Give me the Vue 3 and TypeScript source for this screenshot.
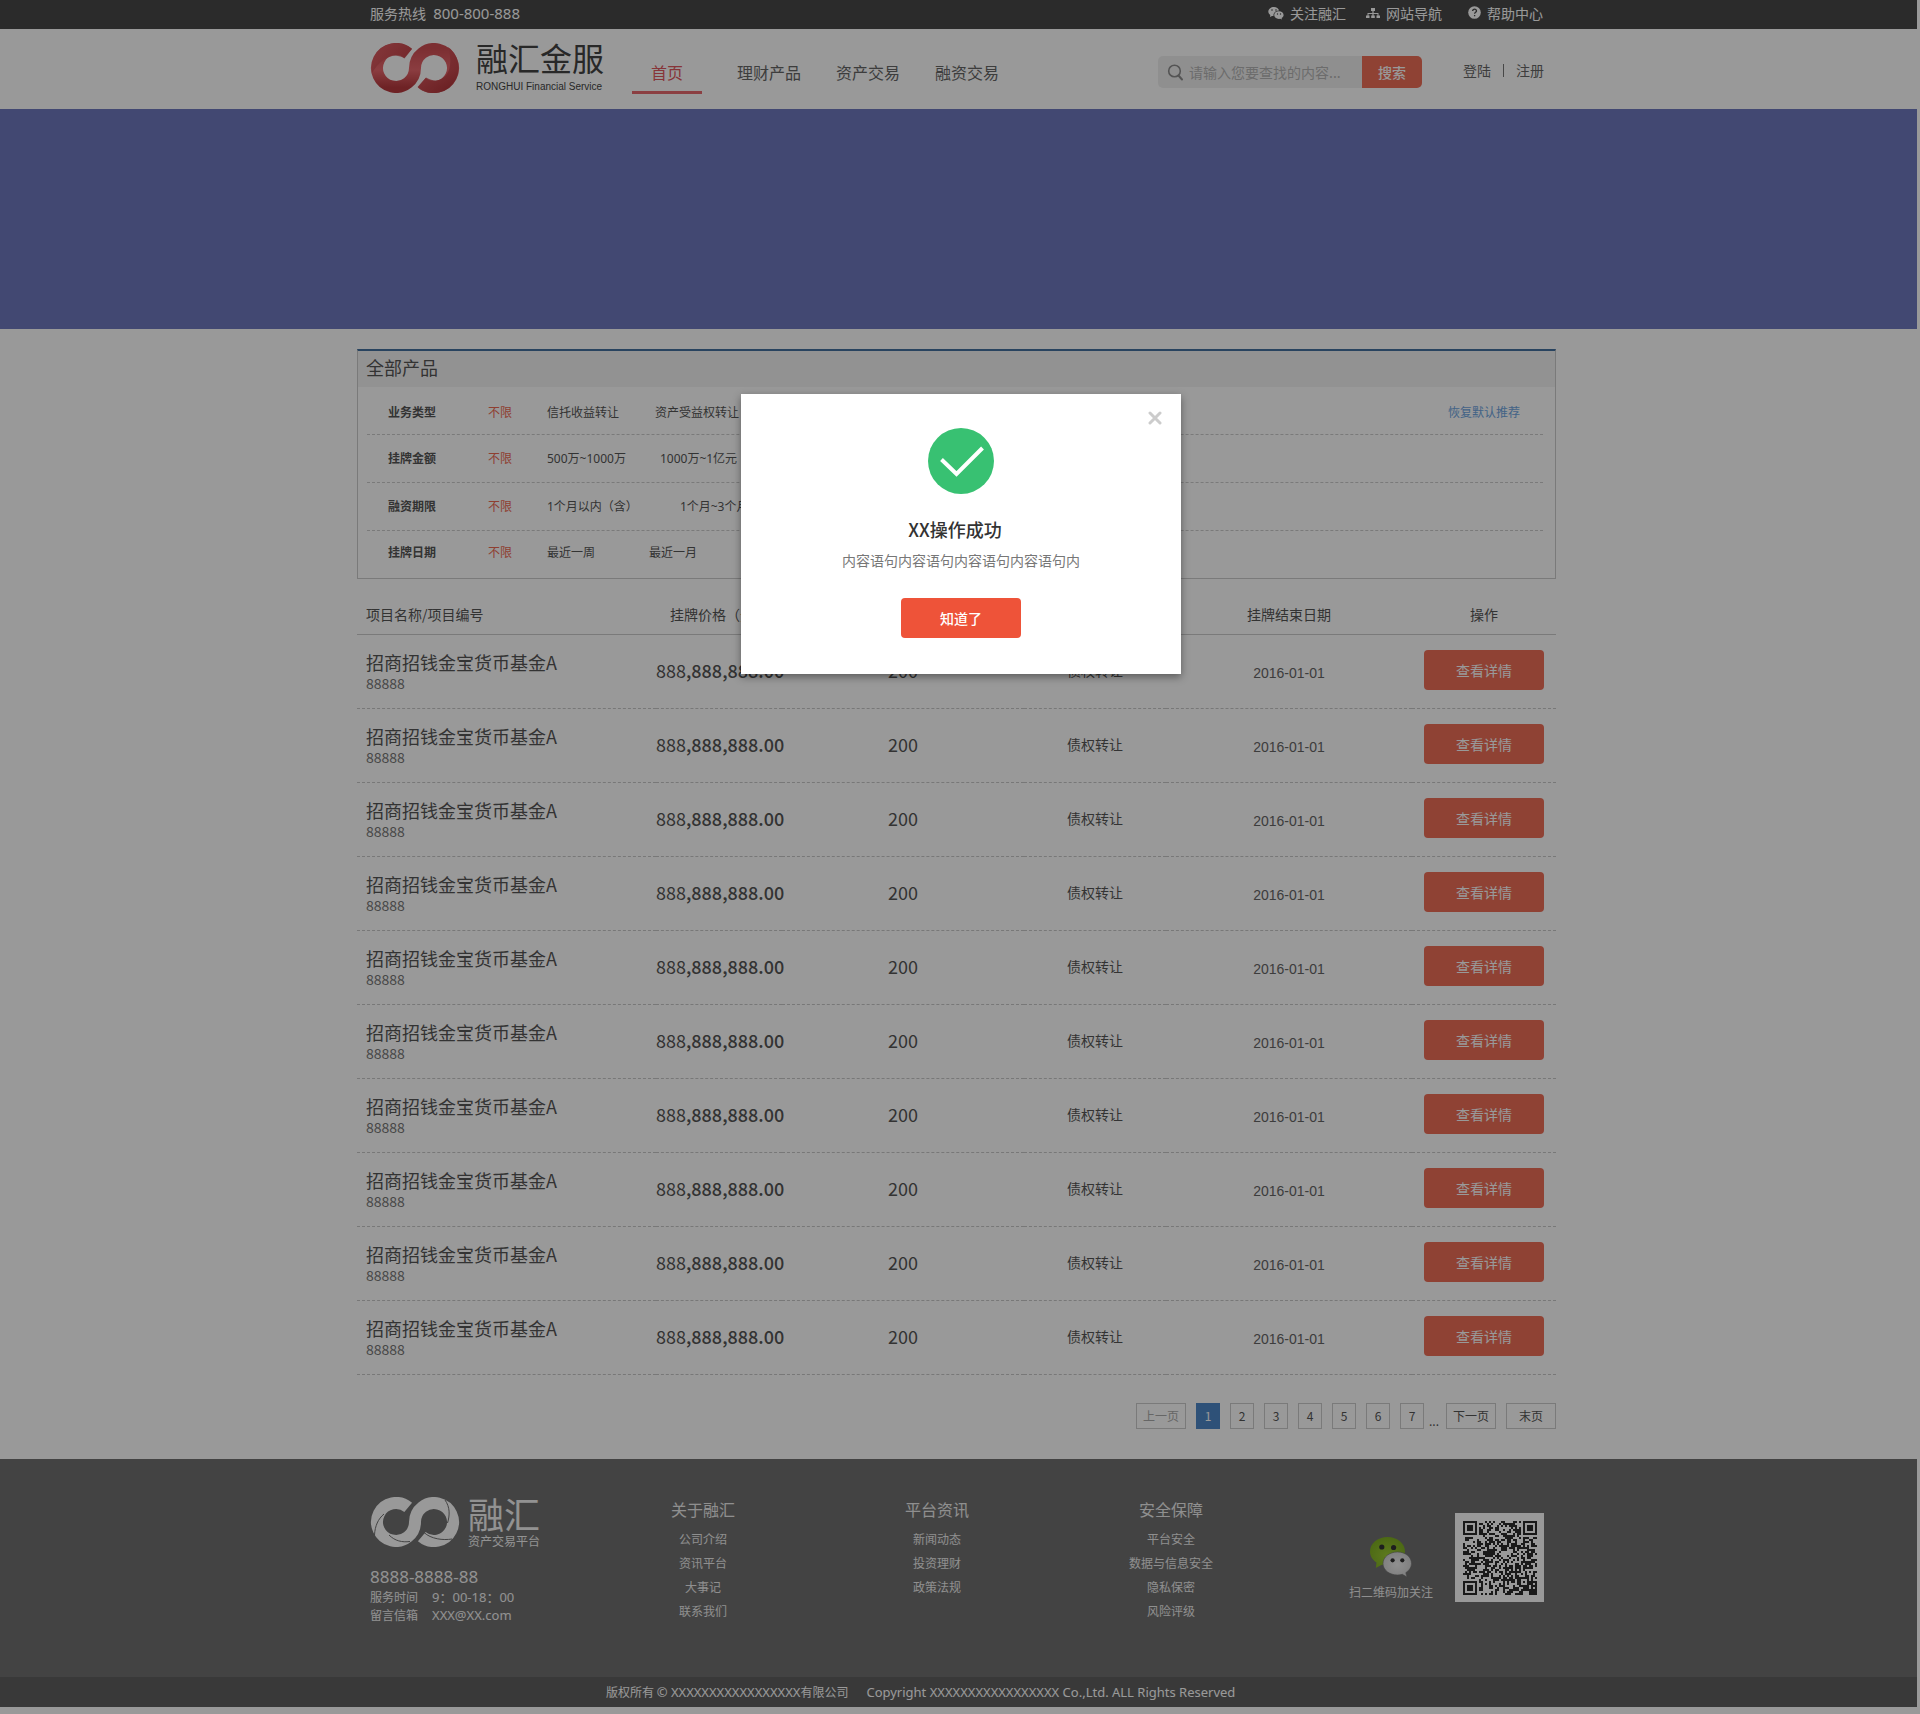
<script setup lang="ts">
import { ref } from 'vue'

interface FilterRow {
  label: string
  options: string[]
  gap: number
}

interface FooterColumn {
  title: string
  links: string[]
}

const navItems = ['首页', '理财产品', '资产交易', '融资交易']
const keyword = ref('')
const dialogOpen = ref(true)

const filters: FilterRow[] = [
  { label: '业务类型', options: ['信托收益转让', '资产受益权转让'], gap: 36 },
  { label: '挂牌金额', options: ['500万~1000万', '1000万~1亿元'], gap: 34 },
  { label: '融资期限', options: ['1个月以内（含）', '1个月~3个月'], gap: 42 },
  { label: '挂牌日期', options: ['最近一周', '最近一月'], gap: 54 },
]

const products = Array.from({ length: 10 }, (_, id) => ({
  id,
  name: '招商招钱金宝货币基金A',
  code: '88888',
  priceHead: '888',
  priceTail: ',888,888.00',
  days: '200',
  type: '债权转让',
  endDate: '2016-01-01',
}))

const pages = [1, 2, 3, 4, 5, 6, 7]
const currentPage = ref(1)

const footerColumns: FooterColumn[] = [
  { title: '关于融汇', links: ['公司介绍', '资讯平台', '大事记', '联系我们'] },
  { title: '平台资讯', links: ['新闻动态', '投资理财', '政策法规'] },
  { title: '安全保障', links: ['平台安全', '数据与信息安全', '隐私保密', '风险评级'] },
]

// 37 x 37 code: three finder squares, one alignment square, scattered data cells
const QR = 37

function square(x: number, y: number, cx: number, cy: number, rings: boolean[]): boolean | null {
  const d = Math.max(Math.abs(x - cx), Math.abs(y - cy))
  return d < rings.length ? rings[d] : null
}

function buildQr(): string {
  const finder = [true, true, false, true, false]
  let seed = 20161
  let path = ''
  for (let y = 0; y < QR; y++) {
    for (let x = 0; x < QR; x++) {
      seed = (seed * 1103515245 + 12345) % 2147483648
      let on = (seed >> 12) % 100 < 52
      const fixed =
        square(x, y, 3, 3, finder) ??
        square(x, y, QR - 4, 3, finder) ??
        square(x, y, 3, QR - 4, finder) ??
        square(x, y, 30, 30, [true, false, true])
      if (fixed !== null) on = fixed
      if (on) path += `M${x} ${y}h1v1h-1z`
    }
  }
  return path
}

const qrPath = buildQr()
</script>

<template>
  <div class="page">
    <div class="topbar">
      <div class="wrap inset bar">
        <p class="hotline">服务热线 <span class="tel">800-800-888</span></p>
        <nav class="quick">
          <a href="#" class="q1">
            <svg width="16" height="14" viewBox="0 0 16 14"><path fill="#fff" d="M6 1C2.7 1 .3 3 .3 5.600c0 1.400.8 2.600 2 3.500L2 10.900l2-1 1.500.2C5.200 7 7.500 4.600 11.200 4.600 10.600 2.500 8.500 1 6 1z" /><path fill="#fff" d="M10.900 5.300c-2.700 0-4.700 1.700-4.700 3.800s2 3.800 4.700 3.800l1.400-.2 1.700.9-.4-1.500c1.200-.7 2-1.800 2-3 0-2.100-2-3.800-4.700-3.800z" /><g fill="#484848"><circle cx="4" cy="4" r=".8" /><circle cx="8" cy="4" r=".8" /><circle cx="9.500" cy="8" r=".7" /><circle cx="12.500" cy="8" r=".7" /></g></svg>
            关注融汇
          </a>
          <a href="#" class="q2">
            <svg width="14" height="12" viewBox="0 0 14 12"><path fill="#fff" d="M5 1h4v3H7.600v2H12.500v2.500H14V11h-3.500V8.500h1V7H7.600v1.500H8.800V11H5.200V8.500h1.200V7H2.500v1.500h1V11H0V8.500h1.500V6h4.900V4H5z" /></svg>
            网站导航
          </a>
          <a href="#" class="q3">
            <svg width="13" height="13" viewBox="0 0 13 13"><circle cx="6.500" cy="6.500" r="6.300" fill="#fff" /><path d="M4.600 5.100c0-2.600 4-2.400 3.900-.1 0 1.300-1.900 1.300-1.900 2.800M6.600 9v1.300" fill="none" stroke="#484848" stroke-width="1.300" /></svg>
            帮助中心
          </a>
        </nav>
      </div>
    </div>

    <header class="header">
      <div class="wrap inset head">
        <a href="#" class="logo" aria-label="融汇金服">
          <svg width="90" height="50" viewBox="0 0 90 50">
            <defs>
              <linearGradient id="redA" x1="0" y1="0" x2="0" y2="1">
                <stop offset="0" stop-color="#cf4f54" />
                <stop offset="0.55" stop-color="#e8666c" />
                <stop offset="1" stop-color="#b83a3f" />
              </linearGradient>
              <linearGradient id="redB" x1="0" y1="0" x2="1" y2="1">
                <stop offset="0" stop-color="#e8666c" />
                <stop offset="1" stop-color="#a82e33" />
              </linearGradient>
            </defs>
            <path d="M38.200 10.400A19 19 0 1 0 45 25A19 19 0 1 1 51.800 39.600" fill="none" stroke="url(#redA)" stroke-width="12" />
            <path d="M2 30A25 25 0 0 1 38 3L42 6L34.500 15.500C24 8 10 16 2 30z" fill="url(#redB)" opacity=".7" />
            <path d="M78 4C90 13 94 32 79 44C71 52 55 52 47.500 44L56 34.500C72 44 86 30 78 4z" fill="url(#redB)" opacity=".8" />
          </svg>
          <span class="logo-text">
            <strong>融汇金服</strong>
            <small>RONGHUI Financial Service</small>
          </span>
        </a>
        <nav class="nav">
          <a v-for="(item, i) in navItems" :key="item" href="#" :class="{ active: i === 0 }">{{ item }}</a>
        </nav>
        <form class="search" @submit.prevent>
          <label class="field">
            <svg width="17" height="17" viewBox="0 0 17 17"><circle cx="7.500" cy="7" r="5.800" fill="none" stroke="#8c8c8c" stroke-width="1.600" /><path d="M11.500 11.500L15 15.500" stroke="#8c8c8c" stroke-width="2" stroke-linecap="round" /></svg>
            <input v-model="keyword" type="text" placeholder="请输入您要查找的内容..." aria-label="搜索内容" />
          </label>
          <button type="submit">搜索</button>
        </form>
        <div class="account"><a href="#">登陆</a><i></i><a href="#">注册</a></div>
      </div>
    </header>

    <div class="banner"></div>

    <main>
      <div class="wrap">
        <section class="filters">
          <h1>全部产品</h1>
          <div class="filter-list">
            <div v-for="(row, i) in filters" :key="row.label" class="filter-row">
              <b>{{ row.label }}</b>
              <button type="button" class="any">不限</button>
              <div class="options" :style="{ gap: row.gap + 'px' }">
                <button v-for="option in row.options" :key="option" type="button">{{ option }}</button>
              </div>
              <a v-if="i === 0" href="#" class="reset">恢复默认推荐</a>
            </div>
          </div>
        </section>

        <table class="products">
          <colgroup>
            <col class="c-name" /><col class="c-price" /><col class="c-days" /><col class="c-type" /><col class="c-date" /><col class="c-act" />
          </colgroup>
          <thead>
            <tr>
              <th class="name">项目名称/项目编号</th>
              <th>挂牌价格（元）</th>
              <th>期限（天）</th>
              <th>业务类型</th>
              <th>挂牌结束日期</th>
              <th>操作</th>
            </tr>
          </thead>
          <tbody>
            <tr v-for="p in products" :key="p.id">
              <td class="name"><span class="title">{{ p.name }}</span><span class="code">{{ p.code }}</span></td>
              <td class="num">{{ p.priceHead }}<b>{{ p.priceTail }}</b></td>
              <td class="num">{{ p.days }}</td>
              <td>{{ p.type }}</td>
              <td class="date">{{ p.endDate }}</td>
              <td><button type="button" class="detail">查看详情</button></td>
            </tr>
          </tbody>
        </table>

        <nav class="pager">
          <button type="button" class="wide" disabled>上一页</button>
          <button v-for="n in pages" :key="n" type="button" :class="{ current: n === currentPage }" @click="currentPage = n">{{ n }}</button>
          <span class="more">...</span>
          <button type="button" class="wide">下一页</button>
          <button type="button" class="wide">末页</button>
        </nav>
      </div>
    </main>

    <footer>
      <div class="foot-main">
        <div class="wrap inset foot">
          <div class="brand">
            <div class="foot-logo">
              <svg width="90" height="50" viewBox="0 0 90 50">
                <path d="M38.200 10.400A19 19 0 1 0 45 25A19 19 0 1 1 51.800 39.600" fill="none" stroke="#fff" stroke-width="12" />
                <path d="M4.500 38C5 29 8 22 14 17M19 38C25 44 32 45.500 40 44.500M75 3C80 10 80 18 77.500 26M54 35.500C61 42 73 43.500 82 42" fill="none" stroke="#707070" stroke-width="1" />
              </svg>
              <span class="foot-name"><strong>融汇</strong><small>资产交易平台</small></span>
            </div>
            <p class="phone">8888-8888-88</p>
            <p class="contact"><span>服务时间</span><span class="latin">9：00-18：00</span></p>
            <p class="contact"><span>留言信箱</span><span class="latin">XXX@XX.com</span></p>
          </div>
          <div v-for="col in footerColumns" :key="col.title" class="foot-col">
            <h2>{{ col.title }}</h2>
            <a v-for="link in col.links" :key="link" href="#">{{ link }}</a>
          </div>
          <div class="follow">
            <svg width="42" height="40" viewBox="0 0 42 40">
              <defs>
                <radialGradient id="wg" cx=".5" cy=".6" r=".6"><stop offset="0" stop-color="#9ccc32" /><stop offset="1" stop-color="#7eae22" /></radialGradient>
                <radialGradient id="ww" cx=".5" cy=".5" r=".6"><stop offset="0" stop-color="#f0f0f0" /><stop offset="1" stop-color="#d0d0d0" /></radialGradient>
              </defs>
              <path d="M17.500 0C7.500 0 0 6.500 0 14.500c0 4.600 2.400 8.400 6.500 11L5.800 31l6-3.300c1.900.5 3.800.8 5.700.8C27.500 28.500 35 22 35 14.300S27.500 0 17.500 0z" fill="url(#wg)" />
              <path d="M27.500 15c-8 0-14.500 5-14.500 11.500S19.500 38 27.500 38c1.700 0 3.300-.2 4.800-.7L37 40l-1.200-4.300C39 33.600 41.500 30.400 41.500 26.500 41.500 20 35.500 15 27.500 15z" fill="url(#ww)" stroke="#707070" stroke-width=".6" />
              <g fill="#333"><circle cx="11.800" cy="10" r="2.600" /><circle cx="23.600" cy="10.500" r="2.600" /><circle cx="22.600" cy="23.300" r="2.100" /><circle cx="32.300" cy="23.300" r="2.100" /></g>
            </svg>
            <span>扫二维码加关注</span>
          </div>
          <div class="qr"><svg :viewBox="`0 0 ${QR} ${QR}`" width="74" height="74" shape-rendering="crispEdges"><path :d="qrPath" fill="#2c2c2c" /></svg></div>
        </div>
      </div>
      <div class="copyright">
        <p class="wrap"><span>版权所有 <em>© XXXXXXXXXXXXXXXXX</em>有限公司</span><em>Copyright XXXXXXXXXXXXXXXXX Co.,Ltd. ALL Rights Reserved</em></p>
      </div>
    </footer>

    <div v-if="dialogOpen" class="mask">
      <div class="dialog" role="dialog" aria-modal="true" aria-labelledby="dialog-title">
        <button type="button" class="close" aria-label="关闭" @click="dialogOpen = false">
          <svg width="14" height="14" viewBox="0 0 14 14"><path d="M2 2L12 12M12 2L2 12" stroke="#ccc" stroke-width="3" stroke-linecap="round" /></svg>
        </button>
        <svg class="tick" width="66" height="66" viewBox="0 0 66 66"><circle cx="33" cy="33" r="33" fill="#38c172" /><path d="M13.500 31.500L28.500 46L54.500 20" fill="none" stroke="#fff" stroke-width="4" /></svg>
        <h2 id="dialog-title">XX操作成功</h2>
        <p>内容语句内容语句内容语句内容语句内</p>
        <button type="button" class="ok" @click="dialogOpen = false">知道了</button>
      </div>
    </div>
  </div>
</template>

<style>
body {
  margin: 0;
  background: #fff;
}
</style>

<style scoped>
* {
  box-sizing: border-box;
}

.page {
  position: relative;
  min-height: 100vh;
  padding-right: 3px;
  background: #fff;
  color: #555;
  font: 14px/20px "Noto Sans CJK SC", sans-serif;
}

p,
h1,
h2 {
  margin: 0;
  font-weight: 400;
}

a {
  color: inherit;
  text-decoration: none;
}

button {
  padding: 0;
  border: 0;
  background: none;
  color: inherit;
  font: inherit;
  white-space: nowrap;
}

em {
  font-style: normal;
}

svg {
  display: block;
  flex: none;
}

.topbar,
.header,
main,
.foot-main,
.copyright {
  padding-right: 4px;
}

.wrap {
  max-width: 1199px;
  margin: 0 auto;
}

.inset {
  padding: 0 12px 0 13px;
}

/* top bar */
.topbar {
  background: #484848;
  color: #fff;
}

.bar {
  display: flex;
  align-items: center;
  justify-content: space-between;
  height: 29px;
  padding-right: 13px;
  padding-bottom: 4px;
}

.tel {
  margin-left: 4px;
  font: 15px/20px "Noto Sans", sans-serif;
}

.quick,
.quick a {
  display: flex;
  align-items: center;
}

.quick {
  gap: 20px;
}

.quick a {
  gap: 6px;
}

.quick .q3 {
  margin-left: 6px;
}

/* header */
.head {
  display: flex;
  align-items: center;
  height: 80px;
}

.logo {
  display: flex;
  align-items: center;
  width: 262px;
  padding-bottom: 2px;
  gap: 16px;
  color: #444;
}

.logo-text strong,
.logo-text small,
.foot-name strong,
.foot-name small {
  display: block;
  white-space: nowrap;
}

.logo-text strong {
  font-size: 32px;
  font-weight: 400;
  line-height: 30px;
}

.logo-text small {
  margin-top: 8px;
  font: 10px/14px "Liberation Sans", sans-serif;
}

.nav {
  display: flex;
  margin-top: 7px;
  gap: 35px;
  color: #666;
  font-size: 16px;
}

.nav a {
  height: 42px;
  padding-top: 8px;
  line-height: 24px;
}

.nav .active {
  padding-right: 19px;
  padding-left: 19px;
  border-bottom: 3px solid #e8696f;
  color: #e2575e;
}

.search {
  display: flex;
  height: 32px;
  margin-top: 6px;
  margin-left: auto;
}

.field {
  display: flex;
  align-items: center;
  width: 204px;
  padding-left: 9px;
  gap: 5px;
  border-radius: 5px 0 0 5px;
  background: #efefef;
}

.field input {
  width: 168px;
  min-width: 0;
  padding: 0;
  border: 0;
  outline: 0;
  background: none;
  font: inherit;
}

.field input::placeholder {
  color: #b4b4b4;
  opacity: 1;
}

.search button {
  width: 60px;
  border-radius: 0 5px 5px 0;
  background: #ee6e58;
  color: #fff;
  font-weight: 500;
}

.account {
  display: flex;
  align-items: center;
  margin-top: 2px;
  margin-left: 41px;
  color: #666;
}

.account i {
  width: 1px;
  height: 13px;
  margin: 0 12px;
  background: #777;
}

.banner {
  height: 220px;
  background: #6e78be;
}

/* filters */
main {
  padding-top: 20px;
}

.filters {
  border: 1px solid #ccc;
  border-top: 2px solid #44709f;
}

.filters h1 {
  height: 36px;
  padding-left: 8px;
  background: #f3f3f3;
  color: #555;
  font-size: 18px;
  line-height: 32px;
}

.filter-list {
  padding: 0 12px 0 9px;
  font: 12px/18px "Noto Sans", "Noto Sans CJK SC", sans-serif;
}

.filter-row {
  display: flex;
  align-items: center;
  height: 48px;
  padding: 0 23px 0 21px;
  border-bottom: 1px dashed #ccc;
}

.filter-row:first-child {
  padding-top: 4px;
}

.filter-row:last-child {
  height: 47px;
  padding-bottom: 3px;
  border-bottom: 0;
}

.filter-row b {
  width: 100px;
  color: #555;
}

.any {
  width: 59px;
  color: #ee6a53;
  text-align: left;
}

.options {
  display: flex;
}

.reset {
  margin-left: auto;
  color: #6fa6df;
}

/* product table */
.products {
  width: 100%;
  border-spacing: 0;
  table-layout: fixed;
}

.c-name { width: 299px; }
.c-price { width: 126px; }
.c-days { width: 242px; }
.c-type { width: 142px; }
.c-date { width: 246px; }
.c-act { width: 144px; }

th,
td {
  padding: 0;
  text-align: center;
  white-space: nowrap;
}

th {
  height: 56px;
  padding-top: 15px;
  border-bottom: 1px solid #ccc;
  font-weight: 400;
}

td {
  height: 74px;
  padding-bottom: 3px;
  border-bottom: 1px dashed #c8c8c8;
}

.name {
  padding-left: 9px;
  text-align: left;
}

td.name {
  padding-bottom: 1px;
}

.title,
.code {
  display: block;
}

.title {
  color: #555;
  font-size: 18px;
  line-height: 24px;
}

.code {
  color: #777;
  line-height: 18px;
}

.num {
  font-size: 18px;
}

.num b {
  font-weight: 500;
}

td.date {
  padding-top: 4px;
  padding-bottom: 1px;
  color: #666;
  font-family: "Liberation Sans", sans-serif;
}

.detail {
  width: 120px;
  height: 40px;
  border-radius: 4px;
  background: #ee6e58;
  color: #fff;
}

/* pager */
.pager {
  display: flex;
  justify-content: flex-end;
  padding: 28px 0;
  gap: 10px;
  font-size: 12px;
}

.pager button {
  width: 24px;
  height: 26px;
  border: 1px solid #ccc;
}

.pager .wide {
  width: 50px;
}

.pager button:disabled {
  color: #aaa;
}

.pager .current {
  border-color: #4e88c8;
  background: #4e88c8;
  color: #fff;
}

.more {
  width: 12px;
  margin: 0 -5px;
  padding-top: 8px;
}

/* footer */
.foot-main {
  background: #707070;
  color: #fff;
}

.foot {
  display: flex;
  height: 218px;
  padding-top: 38px;
}

.brand {
  width: 216px;
  color: #f4f4f4;
}

.foot-logo {
  display: flex;
  gap: 8px;
}

.foot-name strong {
  font-size: 36px;
  font-weight: 400;
  line-height: 32px;
}

.foot-name small {
  margin-top: 4px;
  font-size: 12px;
  line-height: 16px;
}

.phone {
  margin-top: 17px;
  font: 17px/22px "Noto Sans", sans-serif;
}

.contact {
  display: flex;
  gap: 14px;
  font-size: 12px;
  line-height: 18px;
}

.latin {
  font-family: "Noto Sans", "Noto Sans CJK SC", sans-serif;
  font-size: 13px;
}

.foot-col {
  display: flex;
  flex-direction: column;
  align-items: center;
  width: 234px;
  color: #eee;
  font-size: 12px;
  line-height: 24px;
}

.foot-col h2 {
  margin-bottom: 6px;
  font-size: 16px;
  line-height: 24px;
}

.follow {
  display: flex;
  flex: none;
  flex-direction: column;
  align-items: center;
  width: 84px;
  margin-left: auto;
  padding-top: 40px;
  gap: 6px;
  color: #eee;
  font-size: 12px;
  line-height: 18px;
}

.qr {
  flex: none;
  width: 89px;
  height: 89px;
  margin: 16px 0 0 22px;
  padding: 8px 7px 7px 8px;
  background: #fff;
}

.copyright {
  background: #5f5f5f;
  color: #fff;
  font-size: 12px;
  line-height: 30px;
}

.copyright p {
  display: flex;
  padding-left: 249px;
  gap: 18px;
}

.copyright em {
  font-family: "Noto Sans", sans-serif;
  font-size: 13px;
}

/* dialog */
.mask {
  position: absolute;
  inset: 0;
  padding: 394px 0 0 2px;
  background: rgba(0, 0, 0, 0.4);
}

.dialog {
  position: relative;
  display: flex;
  flex-direction: column;
  align-items: center;
  width: 440px;
  height: 280px;
  margin: 0 auto;
  padding-top: 34px;
  background: #fff;
  box-shadow: 0 3px 8px rgba(0, 0, 0, 0.4);
}

.close {
  position: absolute;
  top: 17px;
  right: 19px;
}

.dialog h2 {
  margin-top: 22px;
  padding-right: 12px;
  color: #333;
  font-size: 18px;
  font-weight: 500;
  line-height: 26px;
}

.dialog p {
  margin-top: 8px;
  color: #777;
}

.ok {
  width: 120px;
  height: 40px;
  margin-top: 28px;
  border-radius: 4px;
  background: #ee5339;
  color: #fff;
  font-weight: 500;
}
</style>
